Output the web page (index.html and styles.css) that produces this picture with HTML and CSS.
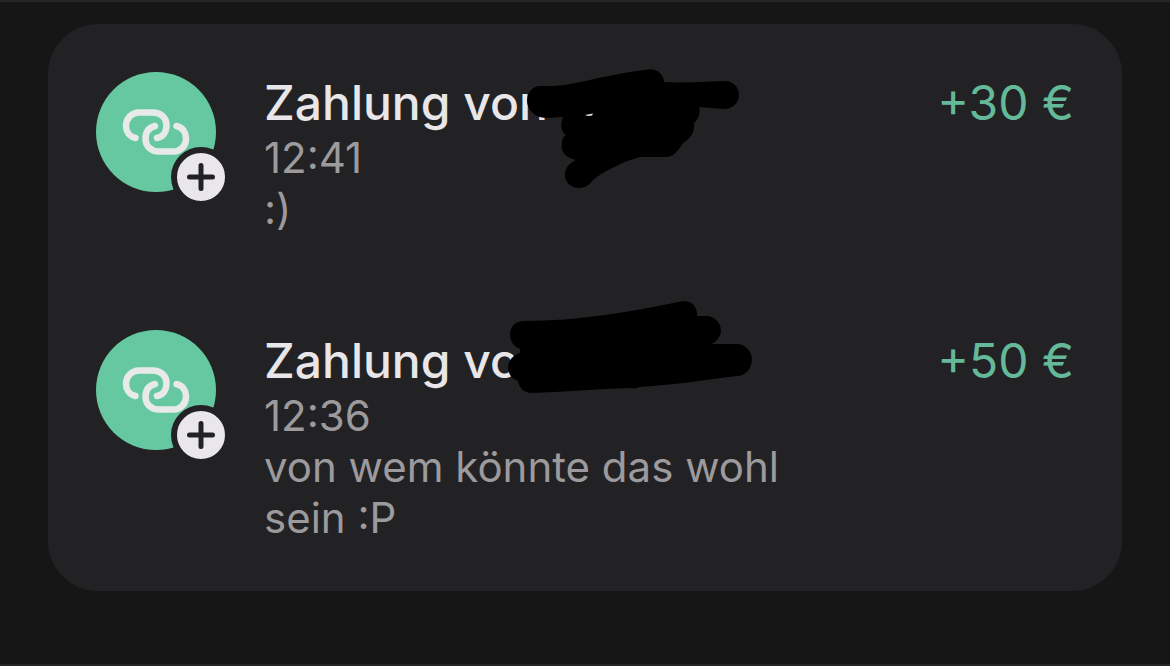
FILE: index.html
```html
<!DOCTYPE html>
<html lang="de">
<head>
  <meta charset="UTF-8">
  <meta name="viewport" content="width=device-width, initial-scale=1.0">
  <title>Zahlungen</title>
  <link rel="stylesheet" href="styles.css">
</head>
<body>
  <ul class="card">
    <li class="payment">
      <div class="avatar">
        <svg class="link-icon" viewBox="0 0 120 120" aria-hidden="true">
          <path d="M39.500 66C33 64.500 30 59 30 54C30 46 36 40.500 43 40.500H57C65 40.500 70.500 46 70.500 53C70.500 60 67 65 61 66" />
          <path d="M80.500 54C87 55.500 90 60.500 90 66.500C90 74 84.500 79.500 77.500 79.500H63C55 79.500 49.500 74 49.500 67C49.500 60 53 55.500 59 54" />
        </svg>
        <svg class="badge" viewBox="0 0 48 48" aria-hidden="true">
          <path d="M24 12.500V35.500M12.500 24H35.500" />
        </svg>
      </div>
      <div class="details">
        <h2 class="title">Zahlung von
          <svg class="scribble" viewBox="264 74 500 126" aria-hidden="true">
            <path d="M527 101C527 92 533 86 541 86C548 86 556 86 565 85C588 81 617 73 648 69.500C657 68 664 75 664 82C680 83 704 82 724 81C733 81 739 87 739 95C739 103 733 109 723 109L699 107C701 113 698 120 694 123C695 133 690 139 683 143C679 149 675 157 665 157H640C625 161 606 170 594 179C590 184 586 188 579 188C571 188 565 182 565 175C565 168 569 163 576 160C566 158 560 152 562 143C562 139 563 137 566 135C561 132 560 124 563 117L546 118C535 118 527 109 527 101Z" />
            <path class="glint" d="M585 115L593 113.500L592 115.500L588 116Z" />
          </svg>
        </h2>
        <p class="text">12:41</p>
        <p class="text">:)</p>
      </div>
      <span class="amount">+30 €</span>
    </li>
    <li class="payment">
      <div class="avatar">
        <svg class="link-icon" viewBox="0 0 120 120" aria-hidden="true">
          <path d="M39.500 66C33 64.500 30 59 30 54C30 46 36 40.500 43 40.500H57C65 40.500 70.500 46 70.500 53C70.500 60 67 65 61 66" />
          <path d="M80.500 54C87 55.500 90 60.500 90 66.500C90 74 84.500 79.500 77.500 79.500H63C55 79.500 49.500 74 49.500 67C49.500 60 53 55.500 59 54" />
        </svg>
        <svg class="badge" viewBox="0 0 48 48" aria-hidden="true">
          <path d="M24 12.500V35.500M12.500 24H35.500" />
        </svg>
      </div>
      <div class="details">
        <h2 class="title">Zahlung von
          <svg class="scribble" viewBox="264 332 500 126" aria-hidden="true">
            <path d="M510 335C510 326 516 321 524 321C578 321 630 312 681 301.500C690 299 698 306 697 316H706C715 316 721 323 721 331C721 336 717 341 712 344H736C746 344 752 352 752 359C752 368 746 376 737 376C710 379 675 385 640 387C636 389 631 388 628 388C600 389 560 392 532 393C524 393 519 388 518 381C512 379 508 374 508 367C508 361 513 355 520 353V349C514 347 510 341 510 335Z" />
          </svg>
        </h2>
        <p class="text">12:36</p>
        <p class="text">von wem könnte das wohl sein :P</p>
      </div>
      <span class="amount">+50 €</span>
    </li>
  </ul>
</body>
</html>
```

FILE: styles.css
```css
* {
  box-sizing: border-box;
}

html {
  background: #161616;
}

body {
  margin: 0;
  min-height: 100vh;
  padding: 22px 48px;
  border-top: 2px solid #262627;
  border-bottom: 2px solid #262627;
  font-family: Inter, "Liberation Sans", sans-serif;
  color: #e8e6e8;
}

.card {
  margin: 0;
  padding: 0;
  list-style: none;
  background: #222224;
  border-radius: 50px;
}

.payment {
  display: flex;
  align-items: flex-start;
  gap: 48px;
  padding: 48px;
}

.avatar {
  position: relative;
  flex: none;
  width: 120px;
  height: 120px;
  border-radius: 50%;
  background: #65c8a1;
}

.link-icon {
  display: block;
  fill: none;
  stroke: #e8eae9;
  stroke-width: 6.5;
  stroke-linecap: round;
}

.badge {
  position: absolute;
  left: 75px;
  top: 75px;
  width: 60px;
  height: 60px;
  border-radius: 50%;
  border: 6px solid #222224;
  background: #e9e7ea;
  fill: none;
  stroke: #222224;
  stroke-width: 5;
  stroke-linecap: round;
}

.details {
  flex: 1;
  padding-top: 2px;
}

.title {
  position: relative;
  margin: 0;
  font-size: 48px;
  font-weight: 500;
  line-height: 58px;
}

/* covers the name of the sender */
.scribble {
  position: absolute;
  left: 0;
  top: 0;
  width: 500px;
  height: 126px;
  overflow: visible;
  fill: #000;
}

.glint {
  fill: #e8e6e8;
}

.text {
  margin: 0;
  font-size: 42px;
  line-height: 51px;
  color: #9c9a9d;
}

.amount {
  flex: none;
  padding-top: 2px;
  padding-left: 24px;
  font-size: 48px;
  line-height: 58px;
  color: #65b99b;
}
```
